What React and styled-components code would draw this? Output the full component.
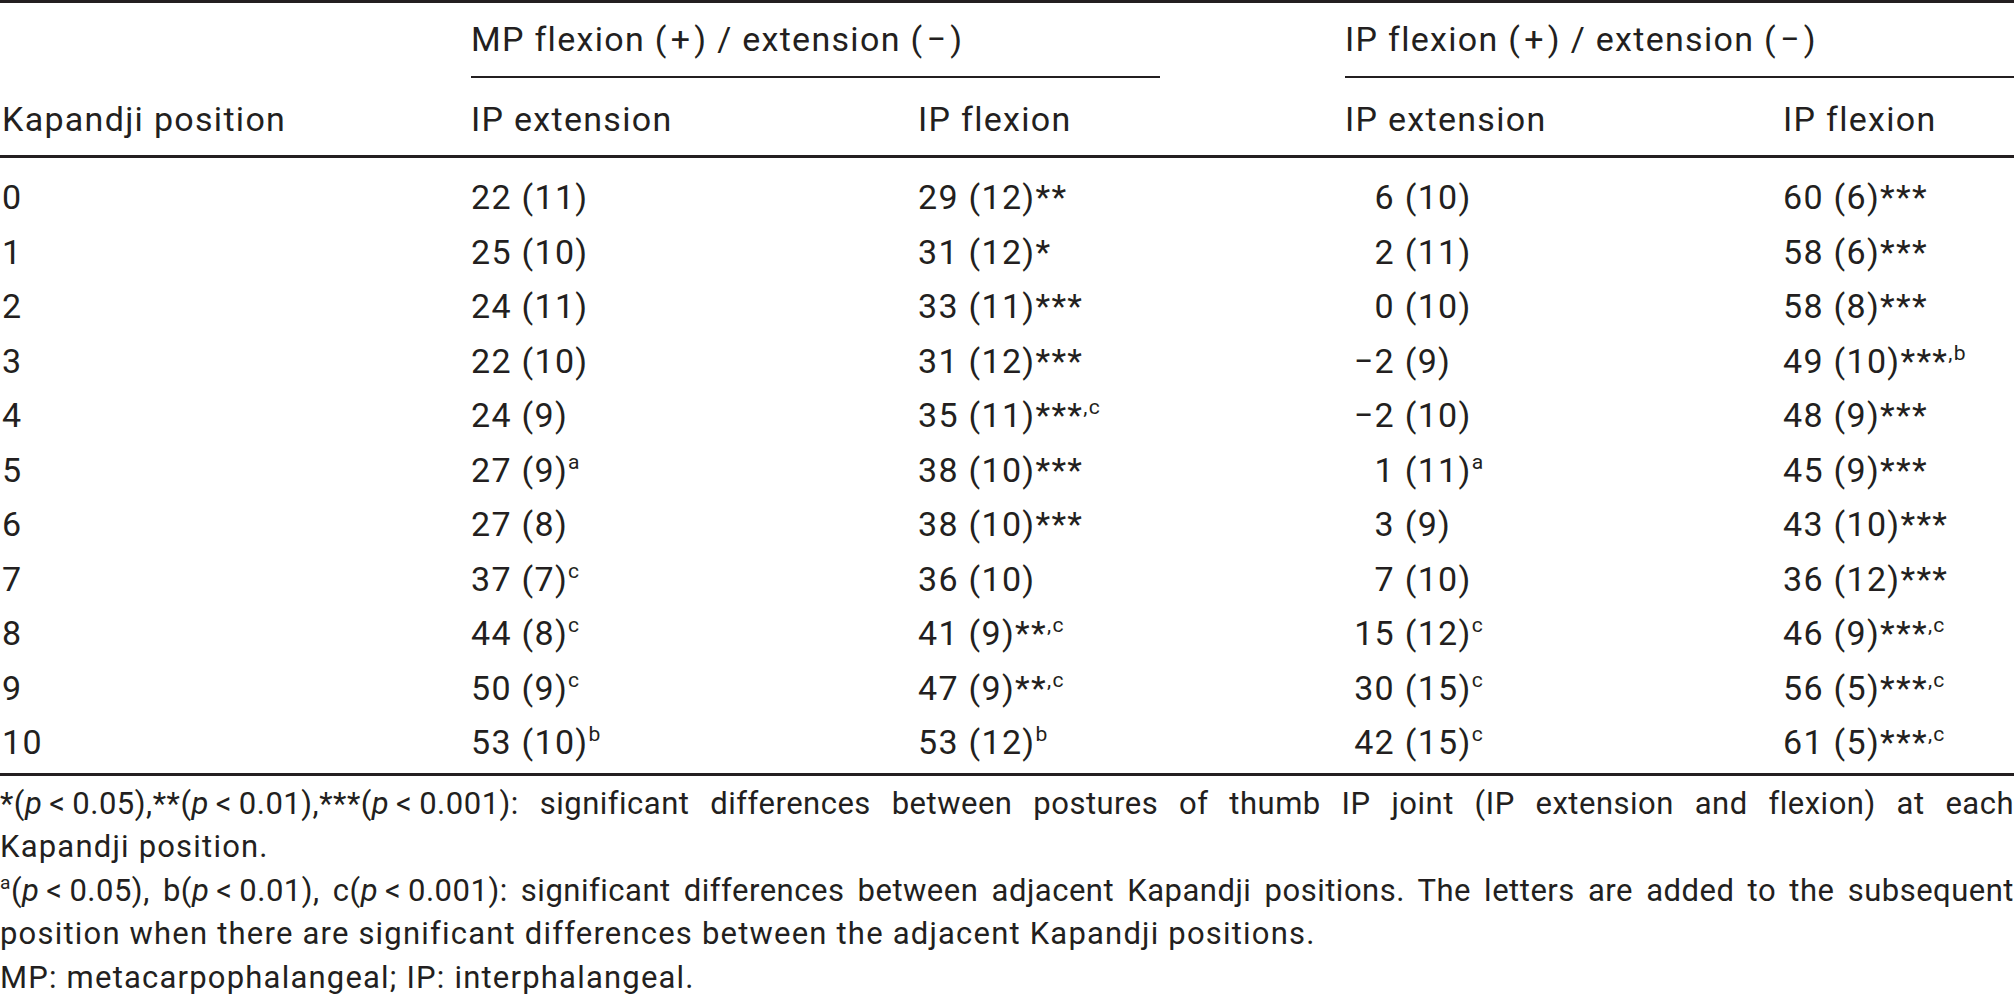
import React from 'react';
import styled, { createGlobalStyle } from 'styled-components';

const INK = '#231f20';

const GlobalStyle = createGlobalStyle`
  body {
    margin: 0;
    background: #fff;
    color: ${INK};
    font-family: Roboto, "Liberation Sans", sans-serif;
  }
`;

const Page = styled.div`
  width: 2014px;
  overflow: hidden;
`;

const Table = styled.div`
  border-top: 3px solid ${INK};
  font-size: 34px;
  letter-spacing: 1.3px;
`;

const Grid = styled.div`
  display: grid;
  grid-template-columns: 471px 447px 427px 438px 1fr;
`;

const GroupRow = styled(Grid)`
  height: 75px;
`;

const Group = styled.div`
  grid-column: span 2;
  line-height: 73px;
  border-bottom: 2px solid ${INK};
  margin-right: ${props => props.trim}px;
  white-space: nowrap;
`;

const Sign = styled.span`
  margin: 0 3px;
`;

const SubRow = styled(Grid)`
  padding: 11px 0 6px;
  line-height: 60px;
  border-bottom: 3px solid ${INK};
`;

const Body = styled.div`
  padding: 12px 0 3px;
  border-bottom: 3px solid ${INK};
`;

const Row = styled(Grid)`
  line-height: 54.5px;
  white-space: nowrap;
`;

const Cell = styled.div`
  padding-left: ${props => (props.first ? 2 : 0)}px;
`;

const Num = styled.span`
  display: inline-block;
  width: 50px;
  text-align: right;
`;

const Sup = styled.sup`
  font-size: 0.62em;
  line-height: 0;
  vertical-align: 0.62em;
`;

const Notes = styled.div`
  padding-top: 6px;
  font-size: 31px;
  line-height: 43.5px;
`;

const Line = styled.div`
  white-space: nowrap;
  letter-spacing: ${props => (props.fill ? 0.5 : 1.2)}px;
  text-align: justify;
  text-align-last: ${props => (props.fill ? 'justify' : 'left')};
`;

const P = styled.i`
  font-style: italic;
`;

const rows = [
  ['0', '22 (11)', '29 (12)**', '6 (10)', '60 (6)***'],
  ['1', '25 (10)', '31 (12)*', '2 (11)', '58 (6)***'],
  ['2', '24 (11)', '33 (11)***', '0 (10)', '58 (8)***'],
  ['3', '22 (10)', '31 (12)***', '\u22122 (9)', '49 (10)***^,b'],
  ['4', '24 (9)', '35 (11)***^,c', '\u22122 (10)', '48 (9)***'],
  ['5', '27 (9)^a', '38 (10)***', '1 (11)^a', '45 (9)***'],
  ['6', '27 (8)', '38 (10)***', '3 (9)', '43 (10)***'],
  ['7', '37 (7)^c', '36 (10)', '7 (10)', '36 (12)***'],
  ['8', '44 (8)^c', '41 (9)**^,c', '15 (12)^c', '46 (9)***^,c'],
  ['9', '50 (9)^c', '47 (9)**^,c', '30 (15)^c', '56 (5)***^,c'],
  ['10', '53 (10)^b', '53 (12)^b', '42 (15)^c', '61 (5)***^,c']
];

const Value = ({ text, aligned }) => {
  const [main, sup] = text.split('^');
  const cut = main.indexOf(' ');
  return (
    <Cell>
      {aligned ? <Num>{main.slice(0, cut)}</Num> : main.slice(0, cut)}
      {main.slice(cut)}
      {sup && <Sup>{sup}</Sup>}
    </Cell>
  );
};

const Lt = ({ v }) => (
  <>
    (<P>p</P>{'\u2009<\u2009'}{v})
  </>
);

const GroupTitle = ({ joint }) => (
  <>
    {joint} flexion (<Sign>+</Sign>) / extension (<Sign>&minus;</Sign>)
  </>
);

const App = () => (
  <Page>
    <GlobalStyle />
    <Table>
      <GroupRow>
        <Cell first />
        <Group trim={185}>
          <GroupTitle joint="MP" />
        </Group>
        <Group trim={0}>
          <GroupTitle joint="IP" />
        </Group>
      </GroupRow>
      <SubRow>
        <Cell first>Kapandji position</Cell>
        <Cell>IP extension</Cell>
        <Cell>IP flexion</Cell>
        <Cell>IP extension</Cell>
        <Cell>IP flexion</Cell>
      </SubRow>
      <Body>
        {rows.map(([pos, a, b, c, d]) => (
          <Row key={pos}>
            <Cell first>{pos}</Cell>
            <Value text={a} />
            <Value text={b} />
            <Value text={c} aligned />
            <Value text={d} />
          </Row>
        ))}
      </Body>
    </Table>
    <Notes>
      <Line fill>
        *<Lt v="0.05" />,**<Lt v="0.01" />,***<Lt v="0.001" />: significant differences between postures of thumb IP joint (IP extension and flexion) at each
      </Line>
      <Line>Kapandji position.</Line>
      <Line fill>
        <Sup>a</Sup>
        <Lt v="0.05" />, b<Lt v="0.01" />, c<Lt v="0.001" />: significant differences between adjacent Kapandji positions. The letters are added to the subsequent
      </Line>
      <Line>position when there are significant differences between the adjacent Kapandji positions.</Line>
      <Line>MP: metacarpophalangeal; IP: interphalangeal.</Line>
    </Notes>
  </Page>
);

export default App;
